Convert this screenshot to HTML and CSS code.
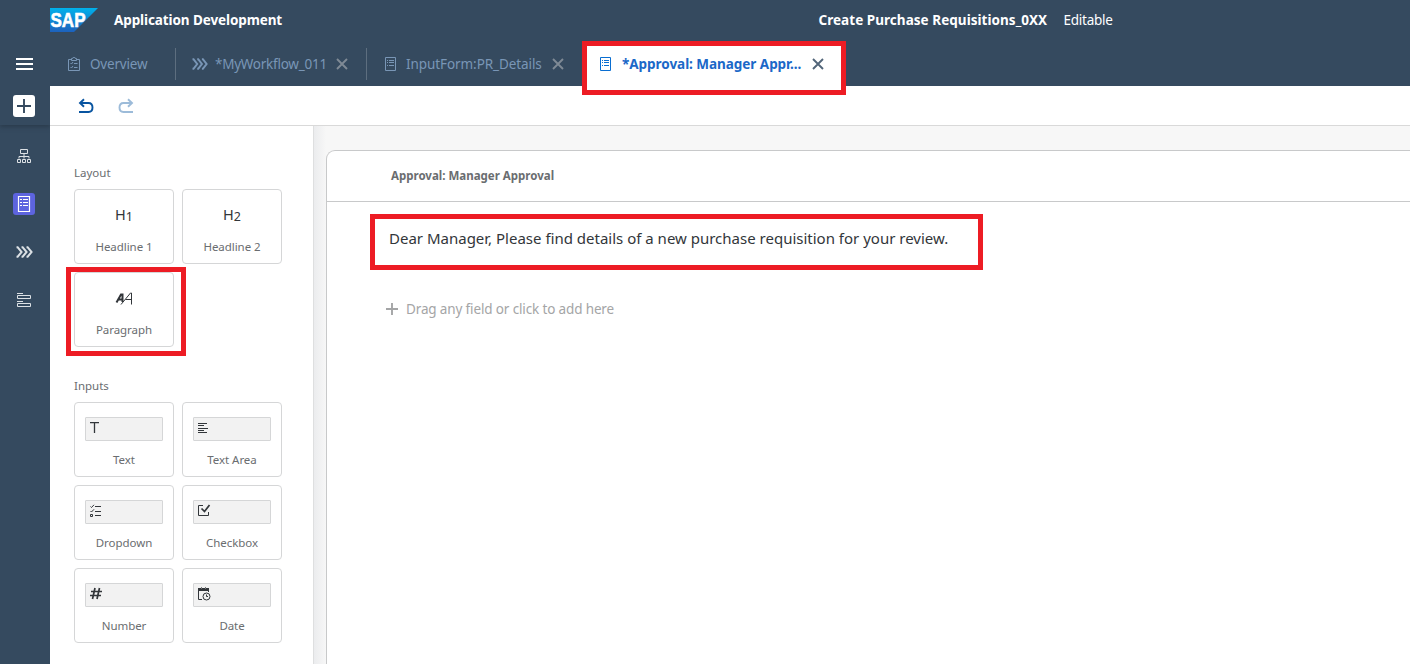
FILE: index.html
```html
<!DOCTYPE html>
<html lang="en">
<head>
<meta charset="utf-8">
<title>Application Development</title>
<link rel="stylesheet" href="styles.css">
</head>
<body>
<svg class="defs" width="0" height="0">
  <symbol id="form" viewBox="0 0 12 14"><path d="M.5.5h10v13H.5z" fill="none" stroke="currentColor"/><path d="M2 3.500h1M4 3.500h5M2 5.500h1M4 5.500h5M2 8.500h1M4 8.500h5" stroke="currentColor"/></symbol>
  <symbol id="flow" viewBox="0 0 16 12"><path d="M.5 1.200h1L5.200 6l-3.700 4.800h-1M5.200 1.200h1L9.900 6l-3.700 4.800h-1M9.900 1.200h1L14.600 6l-3.700 4.800h-1" fill="none" stroke="currentColor" stroke-width="2"/></symbol>
  <symbol id="close" viewBox="0 0 12 12"><path d="M1 1l10 10M11 1L1 11" stroke="currentColor" stroke-width="1.900"/></symbol>
</svg>
<header class="shell">
  <div class="titlebar">
    <svg class="logo" width="48" height="24" viewBox="0 0 48 24"><defs><linearGradient id="g" x2="0" y2="1"><stop offset="0" stop-color="#00b1eb"/><stop offset="1" stop-color="#1d61bd"/></linearGradient></defs><path d="M0 0h48L24 24H0z" fill="url(#g)"/><text x=".5" y="18.500" textLength="35" lengthAdjust="spacingAndGlyphs" class="logo-text">SAP</text></svg>
    <span class="app">Application Development</span>
    <span class="project">Create Purchase Requisitions_0XX</span>
    <span class="state">Editable</span>
  </div>
  <nav class="tabs">
    <svg class="burger" width="17" height="12"><path d="M0 1h17M0 6h17M0 11h17" stroke="#fff" stroke-width="2"/></svg>
    <div class="tab t1"><svg class="icon" width="12" height="14" viewBox="0 0 12 14"><path d="M3 2.500H.5v11h11v-11H9M3.500 3.500v-2h1.200a1.300 1.300 0 0 1 2.600 0h1.200v2zM2.500 6l1 1 1.500-2M2.500 10l1 1 1.500-2M6 6.500h3.500M6 10.500h3.500" fill="none" stroke="currentColor"/></svg><span class="name overview">Overview</span></div>
    <div class="tab t2"><svg class="icon" width="16" height="12"><use href="#flow"/></svg><span class="name workflow">*MyWorkflow_011</span><svg class="x" width="12" height="12"><use href="#close"/></svg></div>
    <div class="tab t3"><svg class="icon" width="12" height="14"><use href="#form"/></svg><span class="name input">InputForm:PR_Details</span><svg class="x" width="12" height="12"><use href="#close"/></svg></div>
    <div class="tab active"><svg class="icon" width="12" height="14"><use href="#form"/></svg><span class="name approval">*Approval: Manager Appr...</span><svg class="x" width="12" height="12"><use href="#close"/></svg><i class="mark mark-tab"></i></div>
  </nav>
</header>
<div class="work">
  <aside class="rail">
    <div class="add"><svg width="22" height="22"><rect width="22" height="22" rx="3" fill="#fff"/><path d="M11 4v14M4 11h14" stroke="#354a5f" stroke-width="1.900"/></svg></div>
    <div class="cell"><svg width="16" height="16"><path d="M4.500 1.500h7v4h-7zM8 5.500v5M3 10.500v-2h10v2M1.500 11.500h3v3h-3zM6.500 11.500h3v3h-3zM11.500 11.500h3v3h-3z" fill="none" stroke="#dce1e5"/></svg></div>
    <div class="cell"><svg width="22" height="22"><rect width="22" height="22" rx="3" fill="#5d64df"/><path d="M5.500 3.500h11v15h-11z" fill="none" stroke="#fff" stroke-width="1.200"/><path d="M7 6.500h2M10 6.500h5M7 9.500h2M10 9.500h5M7 12.500h2M10 12.500h5" stroke="#fff"/></svg></div>
    <div class="cell pale"><svg width="17" height="12" viewBox="0 0 16 12" preserveAspectRatio="none"><use href="#flow"/></svg></div>
    <div class="cell"><svg width="16" height="16"><path d="M1 1.500h6M1 9.500h6M1.500 3.500h13v3h-13zM1.500 11.500h13v3h-13z" fill="none" stroke="#dce1e5"/></svg></div>
  </aside>
  <div class="main">
    <div class="toolbar">
      <svg width="16" height="16" viewBox="0 0 16 16"><path d="M6 1.200L2 5l4 3.800M2 5h8.500q4 0 4 4.500t-4 4.500H1" fill="none" stroke="#0854a0" stroke-width="1.900"/></svg>
      <svg width="16" height="16" viewBox="0 0 16 16"><path d="M10 1.200L14 5l-4 3.800M14 5H5.500q-4 0-4 4.500t4 4.500H15" fill="none" stroke="#9cbbd9" stroke-width="1.900"/></svg>
    </div>
    <div class="content">
      <section class="palette">
        <h2 class="group">Layout</h2>
        <div class="grid">
          <div class="card"><div class="glyph">H<small>1</small></div><span class="label">Headline 1</span></div>
          <div class="card"><div class="glyph">H<small>2</small></div><span class="label">Headline 2</span></div>
          <div class="card"><div class="glyph"><svg class="aa" width="18" height="14"><path d="M1.500 11.500L6 3.500h1.500V11M3.500 8.500h4" fill="none" stroke="#32363a" stroke-width="2"/><path d="M6 13.500L15.500 2h1v11.500M10.500 8.500h6" fill="none" stroke="#32363a"/></svg></div><span class="label">Paragraph</span><i class="mark mark-card"></i></div>
        </div>
        <h2 class="group inputs">Inputs</h2>
        <div class="grid">
          <div class="card"><div class="field"><svg width="13" height="14"><path d="M0 1.600h9M4.500 1.500V12" stroke="#32363a" stroke-width="1.300"/></svg></div><span class="label">Text</span></div>
          <div class="card"><div class="field"><svg width="13" height="14"><path d="M0 2.500h9M0 4.500h6M0 7.500h10M0 9.500h6M0 11.500h9" stroke="#32363a"/></svg></div><span class="label">Text Area</span></div>
          <div class="card"><div class="field"><svg width="13" height="14"><path d="M5 2.500h6M5 7.500h6M5 11.500h6M.5 2.500l1 1L4 .800M.5 7l1 1L4 5.300M.5 10.500h2v2h-2z" fill="none" stroke="#32363a"/></svg></div><span class="label">Dropdown</span></div>
          <div class="card"><div class="field"><svg width="13" height="14"><path d="M5 1.500H.5v10h10V8" fill="none" stroke="#32363a"/><path d="M3.500 4.500L6.500 7.500 11.500 1" fill="none" stroke="#32363a" stroke-width="1.700"/></svg></div><span class="label">Checkbox</span></div>
          <div class="card"><div class="field"><svg width="13" height="14"><path d="M1 4.500h11M0 8.500h11M5 1L2.500 12M9.500 1L7 12" stroke="#32363a" stroke-width="1.700"/></svg></div><span class="label">Number</span></div>
          <div class="card"><div class="field"><svg width="13" height="14"><path d="M.5 2v10.500H4M10.500 2v3" fill="none" stroke="#32363a"/><path d="M0 2.500h11" stroke="#32363a" stroke-width="3"/><path d="M3.500 0v2M7.500 0v2" stroke="#77797b"/><circle cx="8.500" cy="9.500" r="3.500" fill="#f2f2f2" stroke="#32363a"/><path d="M8.500 7.500v2H10" fill="none" stroke="#32363a"/></svg></div><span class="label">Date</span></div>
        </div>
      </section>
      <section class="canvas">
        <div class="form">
          <div class="form-head"><span class="form-title">Approval: Manager Approval</span></div>
          <div class="paragraph"><span class="message">Dear Manager, Please find details of a new purchase requisition for your review.</span></div>
          <div class="drop"><svg width="12" height="12"><path d="M6 0v12M0 6h12" stroke="#a4a5a6" stroke-width="1.900"/></svg><span class="hint">Drag any field or click to add here</span></div>
        </div>
      </section>
    </div>
  </div>
</div>
</body>
</html>
```
FILE: styles.css
```css
* { box-sizing: border-box; }
body { margin: 0; height: 664px; overflow: hidden; font: 14px/20px "Noto Sans", "Open Sans", sans-serif; color: #32363a; background: #fff; display: flex; flex-direction: column; white-space: nowrap; }
svg { display: block; flex: none; }
.defs { position: absolute; }
.shell { height: 86px; background: #354a5f; flex: none; }
.titlebar { height: 40px; padding-left: 50px; display: flex; align-items: center; color: #fff; }
.logo-text { font: bold 20px "Liberation Sans", sans-serif; fill: #fff; stroke: #fff; stroke-width: .6px; }
.app, .project { font-weight: 700; font-size: 13.5px; }
.app { width: 168px; margin-left: 16px; letter-spacing: -.1px; }
.project { width: 229px; margin-left: 536.5px; letter-spacing: .04px; }
.state { margin-left: 16px; font-size: 13.5px; letter-spacing: -.25px; }
.tabs { height: 46px; display: flex; padding-left: 15px; }
.burger { margin: 18px 27px 0 1px; }
.tab { height: 32px; margin-top: 8px; display: flex; align-items: center; color: #7996b6; border-right: 1px solid #5d6e7f; position: relative; }
.name { margin-left: 10px; font-size: 13.5px; }
.overview { letter-spacing: -.2px; }
.workflow { letter-spacing: -.25px; }
.input { letter-spacing: -.08px; }
.x { color: #7f8a95; margin-left: 10px; }
.t1 { width: 116px; padding-left: 8px; }
.t2 { width: 191px; padding-left: 16px; }
.t2 .name { margin-left: 7px; width: 111px; }
.t3 { width: 220px; padding-left: 18px; border: 0; }
.t3 .name { width: 136px; margin-left: 9px; }
.active { width: 254px; height: 41px; margin-top: 5px; padding: 0 0 3px 13px; background: #fff; border: 0; color: #0a6ed1; }
.active .name { width: 180px; margin-left: 10px; font-weight: 700; color: #1b68c8; letter-spacing: -.04px; }
.active .x { color: #526579; }
.mark { position: absolute; border: 5px solid #ed1c24; pointer-events: none; z-index: 2; }
.mark-tab { inset: -4px -5px -9px -5px; }
.work { flex: 1; min-height: 0; display: flex; }
.rail { width: 50px; background: #354a5f; flex: none; overflow: hidden; }
.rail div { display: flex; justify-content: center; align-items: center; height: 48px; padding-right: 2px; }
.rail .add { height: 39px; margin-bottom: 7px; box-shadow: 0 2px 4px #2b3c4d; }
.rail .pale { color: #dce1e5; padding-right: 1px; }
.main { flex: 1; min-width: 0; display: flex; flex-direction: column; }
.toolbar { height: 40px; border-bottom: 1px solid #d9d9d9; padding-left: 28px; display: flex; align-items: center; gap: 24px; }
.content { flex: 1; display: flex; min-height: 0; }
.palette { width: 264px; padding: 37px 0 0 24px; border-right: 1px solid #dedfe0; }
.group { margin: 0 0 6px; font-weight: 400; font-size: 11.5px; line-height: 20px; color: #6a6d70; }
.inputs { margin-top: 29px; }
.grid { display: grid; grid-template-columns: 100px 100px; gap: 8px; }
.card { height: 75px; border: 1px solid #d5d6d7; border-radius: 4px; display: flex; flex-direction: column; align-items: center; position: relative; }
.glyph { height: 18px; margin-top: 15px; font-size: 14.5px; line-height: 18px; display: flex; align-items: center; }
.glyph small { font-size: 12.5px; padding-top: 5px; }
.aa { margin-top: 2px; }
.label { margin-top: 14px; font-size: 11.5px; line-height: 20px; letter-spacing: -.06px; color: #6a6d70; }
.field { width: 78px; height: 24px; margin-top: 14px; padding: 3px 4px; border: 1px solid #d5d6d7; border-radius: 1px; background: #f2f2f2; }
.field + .label { margin-top: 9px; }
.mark-card { inset: -6px -13px -10px -9px; }
.canvas { flex: 1; padding: 24px 0 0 12px; background: linear-gradient(90deg, #ebecee, #f7f7f7 12px); }
.form { height: 540px; background: #fff; border: 1px solid #c8c9ca; border-right: 0; border-radius: 9px 0 0 0; }
.form-head { height: 51px; padding: 15px 0 0 64px; border-bottom: 1px solid #c8c9ca; font-weight: 700; font-size: 11.500px; color: #6a6d70; }
.paragraph { width: 613px; height: 56px; margin: 12px 0 0 43px; padding: 9px 0 0 14px; border: 5px solid #ed1c24; font-size: 15px; }
.drop { display: flex; align-items: center; gap: 8px; margin: 29px 0 0 59px; color: #a4a5a6; font-size: 13.500px; letter-spacing: -.14px; }
```
